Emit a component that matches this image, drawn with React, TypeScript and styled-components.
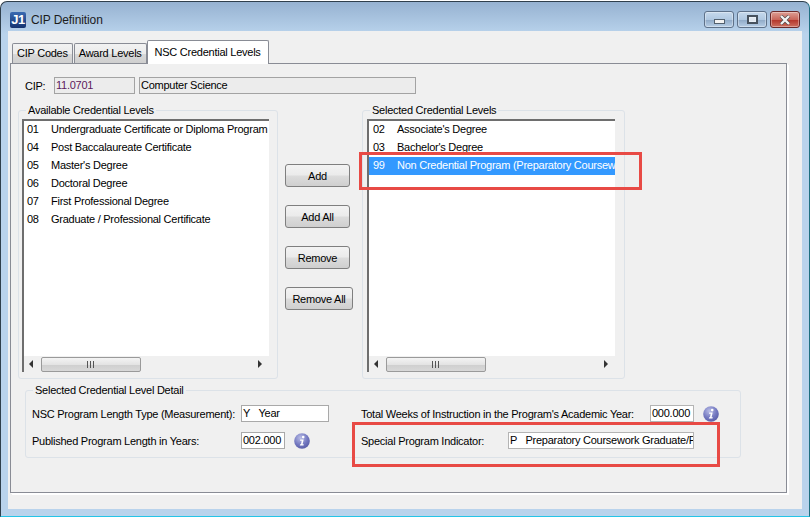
import React from "react"
import styled, { createGlobalStyle } from "styled-components"

const GlobalStyle = createGlobalStyle`
    html, body {
        margin: 0;
        padding: 0;
        background: #ffffff;
    }
    body {
        font-family: "Liberation Sans", Arial, sans-serif;
        font-size: 11px;
        letter-spacing: -0.25px;
        color: #000000;
    }
`

type LevelRow = { code: string; name: string; selected?: boolean }

const availableLevels: LevelRow[] = [
    { code: "01", name: "Undergraduate Certificate or Diploma Program" },
    { code: "04", name: "Post Baccalaureate Certificate" },
    { code: "05", name: "Master's Degree" },
    { code: "06", name: "Doctoral Degree" },
    { code: "07", name: "First Professional Degree" },
    { code: "08", name: "Graduate / Professional Certificate" },
]

const selectedLevels: LevelRow[] = [
    { code: "02", name: "Associate's Degree" },
    { code: "03", name: "Bachelor's Degree" },
    { code: "99", name: "Non Credential Program (Preparatory Coursework)", selected: true },
]

const InfoIcon = () => (
    <SInfo width="16" height="16" viewBox="0 0 16 16">
        <defs>
            <radialGradient id="infoFill" cx="40%" cy="30%" r="75%">
                <stop offset="0%" stopColor="#b9bde6" />
                <stop offset="60%" stopColor="#7378c0" />
                <stop offset="100%" stopColor="#565ba6" />
            </radialGradient>
        </defs>
        <circle cx="8" cy="8" r="7.8" fill="url(#infoFill)" />
        <circle cx="9.2" cy="4.1" r="1.3" fill="#ffffff" />
        <path d="M6.2 6.6 L9.7 6.4 L8.6 11.2 L9.8 11.2 L9.5 12.4 L5.8 12.4 L6.1 11.2 L7 11.2 L7.7 7.8 L6 7.8 Z" fill="#ffffff" />
    </SInfo>
)

const ScrollBar = () => (
    <SScrollBar>
        <SArrow viewBox="0 0 5 8" width="5" height="8"><path d="M4 0 L0 4 L4 8 Z" fill="#333" /></SArrow>
        <SThumb>
            <svg width="8" height="7" viewBox="0 0 8 7">
                <path d="M0.5 0 V7 M3.5 0 V7 M6.5 0 V7" stroke="#555" strokeWidth="1" />
            </svg>
        </SThumb>
        <SArrowRight viewBox="0 0 5 8" width="5" height="8"><path d="M0 0 L4 4 L0 8 Z" fill="#333" /></SArrowRight>
    </SScrollBar>
)

const LevelList = ({ rows, width }: { rows: LevelRow[]; width: number }) => (
    <SList $width={width}>
        <SRows>
            {rows.map((row) => (
                <SRow key={row.code} $selected={!!row.selected} $inset={width > 247 ? 4 : 3}>
                    <SCode>{row.code}</SCode>
                    <span>{row.name}</span>
                </SRow>
            ))}
        </SRows>
        <ScrollBar />
    </SList>
)

const WindowButtons = () => (
    <SControls>
        <SControl>
            <SMinGlyph />
        </SControl>
        <SControl>
            <SMaxGlyph />
        </SControl>
        <SCloseControl>
            <svg width="12" height="10" viewBox="0 0 12 10">
                <path d="M2 1 L10 9 M10 1 L2 9" stroke="#4a4a4a" strokeWidth="3.6" />
                <path d="M2 1 L10 9 M10 1 L2 9" stroke="#f4f4f4" strokeWidth="2.4" />
            </svg>
        </SCloseControl>
    </SControls>
)

export default function App() {
    return (
        <SRoot>
            <GlobalStyle />
            <SWindow>
                <STitleBar>
                    <SLogo>J1</SLogo>
                    <STitle>CIP Definition</STitle>
                    <WindowButtons />
                </STitleBar>
                <SClient>
                    <STabStrip>
                        <STab>CIP Codes</STab>
                        <STab>Award Levels</STab>
                        <SActiveTab>NSC Credential Levels</SActiveTab>
                    </STabStrip>
                    <SPanel>
                        <SCipRow>
                            <SCipLabel>CIP:</SCipLabel>
                            <SCipCode>11.0701</SCipCode>
                            <SCipName>Computer Science</SCipName>
                        </SCipRow>
                        <SListsRow>
                            <SGroup>
                                <SLegend>Available Credential Levels</SLegend>
                                <LevelList rows={availableLevels} width={247} />
                            </SGroup>
                            <SButtons>
                                <SButton>Add</SButton>
                                <SButton>Add All</SButton>
                                <SButton>Remove</SButton>
                                <SWideButton>Remove All</SWideButton>
                            </SButtons>
                            <SGroup>
                                <SLegend>Selected Credential Levels</SLegend>
                                <LevelList rows={selectedLevels} width={248} />
                            </SGroup>
                        </SListsRow>
                        <SDetail>
                            <SDetailLegend>Selected Credential Level Detail</SDetailLegend>
                            <SField>
                                <SFieldLabel $width={209}>NSC Program Length Type (Measurement):</SFieldLabel>
                                <SInput $width={88}>Y&nbsp;&nbsp;&nbsp;Year</SInput>
                            </SField>
                            <SField>
                                <SFieldLabel $width={289}>Total Weeks of Instruction in the Program's Academic Year:</SFieldLabel>
                                <SReadonlyInput $width={44}>000.000</SReadonlyInput>
                                <InfoIcon />
                            </SField>
                            <SField>
                                <SFieldLabel $width={209}>Published Program Length in Years:</SFieldLabel>
                                <SInput $width={44}>002.000</SInput>
                                <InfoIcon />
                            </SField>
                            <SField>
                                <SFieldLabel $width={147}>Special Program Indicator:</SFieldLabel>
                                <SReadonlyInput $width={186}>P&nbsp;&nbsp;&nbsp;Preparatory Coursework Graduate/Professional</SReadonlyInput>
                            </SField>
                        </SDetail>
                    </SPanel>
                </SClient>
            </SWindow>
            <SHighlightTop />
            <SHighlightBottom />
        </SRoot>
    )
}

const SRoot = styled.div`
    position: relative;
    width: 811px;
    height: 517px;
    overflow: hidden;
    background: #ffffff;
`

const SWindow = styled.div`
    box-sizing: border-box;
    width: 810px;
    height: 516px;
    margin-top: 1px;
    padding: 0 7px 6px 7px;
    border: 1px solid #2f3f4c;
    border-right-color: #1d6f80;
    border-bottom: 1px solid #25c4e6;
    border-radius: 7px 7px 0 0;
    background: linear-gradient(180deg, #96b2d1 0%, #b9d3ec 32px, #b9d3ec 100%);
`

const STitleBar = styled.div`
    box-sizing: border-box;
    display: flex;
    align-items: center;
    height: 29px;
    padding: 7px 0 0 2px;
`

const SLogo = styled.div`
    width: 16px;
    height: 16px;
    border-radius: 2px;
    background: linear-gradient(180deg, #3a6ab2 0%, #16336f 100%);
    color: #ffffff;
    font-size: 13px;
    font-weight: bold;
    line-height: 16px;
    text-align: center;
    letter-spacing: -0.5px;
`

const STitle = styled.div`
    margin-left: 5px;
    font-size: 12px;
    letter-spacing: -0.1px;
    color: #1c1c1c;
`

const SControls = styled.div`
    display: flex;
    gap: 3px;
    margin-left: auto;
    margin-right: 2px;
    margin-top: -1px;
`

const SControl = styled.div`
    box-sizing: border-box;
    display: flex;
    align-items: center;
    justify-content: center;
    width: 30px;
    height: 17px;
    border: 1px solid #5e7189;
    border-radius: 3px;
    background: linear-gradient(180deg, #c6d9ec 0%, #b0c8e1 50%, #8fa9c6 52%, #b7cee6 100%);
    box-shadow: inset 0 0 0 1px rgba(255, 255, 255, 0.35);
`

const SCloseControl = styled(SControl)`
    border-color: #6b2a2a;
    background: linear-gradient(180deg, #dd9f95 0%, #c9675b 50%, #b5372c 55%, #cd6f5f 100%);
`

const SMinGlyph = styled.div`
    box-sizing: border-box;
    width: 11px;
    height: 5px;
    margin-top: 4px;
    background: #f2f2f2;
    border: 1px solid #52606e;
`

const SMaxGlyph = styled.div`
    box-sizing: border-box;
    width: 11px;
    height: 9px;
    background: #dfe6ee;
    border: 2px solid #47525e;
    box-shadow: inset 0 0 0 1px #e8eef4;
`

const SClient = styled.div`
    height: 478px;
    background: #f0f0f0;
`

const STabStrip = styled.div`
    display: flex;
    align-items: flex-end;
    height: 32px;
    padding-left: 4px;
`

const STab = styled.div`
    box-sizing: border-box;
    height: 20px;
    margin-right: 1px;
    padding: 0 4px;
    border: 1px solid #898c95;
    border-bottom: none;
    border-radius: 2px 2px 0 0;
    background: linear-gradient(180deg, #f2f2f2 0%, #ebebeb 50%, #d8d8d8 52%, #cfcfcf 100%);
    line-height: 19px;
    white-space: nowrap;
`

const SActiveTab = styled.div`
    position: relative;
    box-sizing: border-box;
    height: 24px;
    margin-left: -1px;
    margin-bottom: -1px;
    padding: 0 7px;
    border: 1px solid #898c95;
    border-bottom: none;
    border-radius: 2px 2px 0 0;
    background: #ffffff;
    line-height: 22px;
    white-space: nowrap;
`

const SPanel = styled.div`
    box-sizing: border-box;
    width: 777px;
    height: 430px;
    margin-left: 2px;
    padding: 13px 0 0 7px;
    border: 1px solid #898c95;
    box-shadow: 1px 1px 0 #ffffff, 2px 2px 0 #ffffff;
`

const SCipRow = styled.div`
    display: flex;
    align-items: center;
    height: 17px;
    padding-left: 7px;
`

const SCipLabel = styled.div`
    width: 29px;
`

const SCipCode = styled.div`
    box-sizing: border-box;
    width: 81px;
    height: 17px;
    padding-left: 1px;
    border: 1px solid #a3a3a3;
    background: #ececec;
    color: #5d1a5d;
    line-height: 14px;
`

const SCipName = styled(SCipCode)`
    width: 277px;
    margin-left: 4px;
    color: #000000;
`

const SListsRow = styled.div`
    display: grid;
    grid-template-columns: 260px 84px 263px;
    height: 269px;
    margin-top: 16px;
`

const SGroup = styled.div`
    position: relative;
    box-sizing: border-box;
    padding: 8px 0 0 3px;
    border: 1px solid #dce2e8;
    border-radius: 3px;
`

const SLegend = styled.div`
    position: absolute;
    top: -7px;
    left: 7px;
    padding: 0 2px;
    background: #f0f0f0;
    line-height: 13px;
    white-space: nowrap;
`

const SList = styled.div<{ $width: number }>`
    box-sizing: border-box;
    display: flex;
    flex-direction: column;
    width: ${({ $width }) => $width}px;
    height: 253px;
    margin-left: ${({ $width }) => ($width > 247 ? 1 : 0)}px;
    border-top: 2px solid #6e6e6e;
    border-left: 2px solid #6e6e6e;
    background: #ffffff;
`

const SRows = styled.div`
    flex: 1;
    overflow: hidden;
`

const SRow = styled.div<{ $selected: boolean; $inset: number }>`
    display: flex;
    height: 18px;
    padding-left: ${({ $inset }) => $inset}px;
    line-height: 17px;
    white-space: nowrap;
    overflow: hidden;
    color: ${({ $selected }) => ($selected ? "#ffffff" : "#000000")};
    background: ${({ $selected }) => ($selected ? "#3399ff" : "transparent")};
`

const SCode = styled.span`
    flex: none;
    width: 24px;
`

const SScrollBar = styled.div`
    display: flex;
    align-items: center;
    height: 16px;
    background: #f0f0f0;
`

const SArrow = styled.svg`
    flex: none;
    margin-left: 5px;
`

const SArrowRight = styled.svg`
    flex: none;
    margin-left: auto;
    margin-right: 6px;
`

const SThumb = styled.div`
    box-sizing: border-box;
    display: flex;
    align-items: center;
    justify-content: center;
    width: 100px;
    height: 15px;
    margin-left: 7px;
    border: 1px solid #9a9a9a;
    border-radius: 2px;
    background: linear-gradient(180deg, #f4f4f4 0%, #e4e4e4 50%, #cfcfcf 52%, #d8d8d8 100%);
`

const SButtons = styled.div`
    display: flex;
    flex-direction: column;
    align-items: flex-start;
    gap: 18px;
    padding: 54px 0 0 7px;
`

const SButton = styled.button`
    box-sizing: border-box;
    width: 65px;
    height: 23px;
    padding: 0;
    border: 1px solid #7f7f7f;
    border-radius: 3px;
    background: linear-gradient(180deg, #f3f3f3 0%, #ebebeb 48%, #dcdcdc 52%, #cfcfcf 100%);
    font-family: inherit;
    font-size: inherit;
    letter-spacing: inherit;
    color: #000000;
`

const SWideButton = styled(SButton)`
    width: 68px;
`

const SDetail = styled.div`
    position: relative;
    box-sizing: border-box;
    display: grid;
    grid-template-columns: 329px 1fr;
    grid-auto-rows: 27px;
    align-items: center;
    width: 716px;
    height: 68px;
    margin: 11px 0 0 7px;
    padding: 9px 0 0 6px;
    border: 1px solid #dce2e8;
    border-radius: 3px;
`

const SDetailLegend = styled(SLegend)`
    left: 7px;
`

const SField = styled.div`
    display: flex;
    align-items: center;
    white-space: nowrap;
`

const SFieldLabel = styled.div<{ $width: number }>`
    flex: none;
    width: ${({ $width }) => $width}px;
`

const SInput = styled.div<{ $width: number }>`
    box-sizing: border-box;
    flex: none;
    width: ${({ $width }) => $width}px;
    height: 17px;
    padding-left: 1px;
    border: 1px solid #a9a9a9;
    background: #ffffff;
    line-height: 14px;
    overflow: hidden;
    white-space: nowrap;
`

const SReadonlyInput = styled(SInput)`
    border-color: #b4b4b4;
`

const SInfo = styled.svg`
    flex: none;
    margin-left: 9px;
`

const SHighlightTop = styled.div`
    position: absolute;
    left: 359px;
    top: 152px;
    width: 283px;
    height: 38px;
    box-sizing: border-box;
    border: 3px solid #e84a45;
`

const SHighlightBottom = styled.div`
    position: absolute;
    left: 352px;
    top: 422px;
    width: 368px;
    height: 45px;
    box-sizing: border-box;
    border: 3px solid #e84a45;
`
